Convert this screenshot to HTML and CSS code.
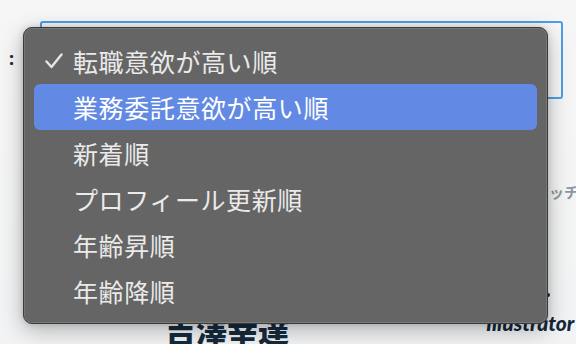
FILE: index.html
```html
<!DOCTYPE html>
<html lang="ja">
<head>
<meta charset="utf-8">
<title>並び替え</title>
<link rel="stylesheet" href="styles.css">
</head>
<body>
<div class="page">
  <div class="toolbar">
    <span class="colon">:</span>
    <div class="select"></div>
  </div>
  <div class="match"><span class="match-text">ッチ</span></div>
  <div class="profile">
    <div class="avatar"></div>
    <div class="name">吉澤幸達</div>
    <div class="skill">
      <span class="dot"></span>
      <span class="skill-text">Illustrator</span>
    </div>
  </div>

  <ul class="menu">
    <li class="item checked"><span class="check"><svg width="18" height="16" viewBox="0 0 18 16"><path d="M1.5 8.5 L6.5 14 L16.5 1.5" fill="none" stroke="#e6e6e6" stroke-width="2.4" stroke-linecap="round" stroke-linejoin="round"/></svg></span>転職意欲が高い順</li>
    <li class="item active">業務委託意欲が高い順</li>
    <li class="item">新着順</li>
    <li class="item">プロフィール更新順</li>
    <li class="item">年齢昇順</li>
    <li class="item">年齢降順</li>
  </ul>
</div>
</body>
</html>
```

FILE: styles.css
```css
* { box-sizing: border-box; }
html, body { margin: 0; padding: 0; }
body {
  width: 576px;
  height: 344px;
  overflow: hidden;
  background: #f4f5f5;
  font-family: "Noto Sans CJK JP", "Noto Sans", sans-serif;
}
.page {
  position: relative;
  width: 576px;
  height: 344px;
  overflow: hidden;
  background: linear-gradient(180deg, #f6f6f6 0%, #f2f3f4 100%);
}
.toolbar {
  display: flex;
  align-items: flex-start;
  padding: 21px 13px 0 8px;
}
.colon {
  width: 32px;
  font-family: "Noto Sans", sans-serif;
  font-size: 18px;
  line-height: 20px;
  font-weight: 700;
  color: #1d2b3a;
  padding-top: 27px;
  padding-left: 1px;
}
.select {
  flex: 1;
  height: 78px;
  border: 2px solid #4ba0e8;
  border-radius: 3px;
  background: #f7f7f7;
}
.match {
  padding-left: 549px;
  margin-top: 80px;
  white-space: nowrap;
}
.match-text {
  font-size: 15px;
  line-height: 18px;
  font-weight: 700;
  color: #8b98a2;
}
.profile {
  display: flex;
  align-items: flex-start;
  margin-top: 83px;
  height: 80px;
}
.avatar {
  width: 48px;
  height: 48px;
  margin: 59px 0 0 62px;
  border-radius: 50%;
  border: 2px solid #4a4f55;
  background: #e9eaeb;
  flex: none;
}
.name {
  margin: 27px 0 0 55px;
  font-size: 31px;
  line-height: 31px;
  font-weight: 900;
  color: #152a3c;
  white-space: nowrap;
}
.skill {
  margin-left: auto;
  width: 90px;
  display: flex;
  flex-direction: column;
  flex: none;
}
.dot {
  width: 4px;
  height: 4px;
  margin: 7px 0 0 60px;
  border-radius: 50%;
  background: #1a2a38;
}
.skill-text {
  margin-top: 15px;
  font-family: "Lato", sans-serif;
  font-size: 21px;
  line-height: 21px;
  font-style: italic;
  font-weight: 900;
  color: #13283a;
  white-space: nowrap;
}
.menu {
  position: absolute;
  left: 23px;
  top: 27px;
  width: 525px;
  height: 297px;
  margin: 0;
  padding: 10px 10px 10px 10px;
  list-style: none;
  background: #656565;
  border: 1px solid #3b3b3b;
  border-radius: 9px;
  box-shadow: inset 0 0 0 1px rgba(255,255,255,0.12), 0 6px 22px rgba(0,0,0,0.28), 0 0 6px rgba(0,0,0,0.15);
}
.item {
  position: relative;
  height: 46px;
  display: flex;
  align-items: center;
  padding-left: 39px;
  border-radius: 6px;
  font-size: 25px;
  letter-spacing: 0.6px;
  color: #eaeaea;
  white-space: nowrap;
}
.check {
  position: absolute;
  left: 11px;
  top: 15px;
  width: 18px;
  height: 16px;
  display: block;
}
.check svg { display: block; }
.item.active {
  background: #6289e3;
  color: #ffffff;
}
```
